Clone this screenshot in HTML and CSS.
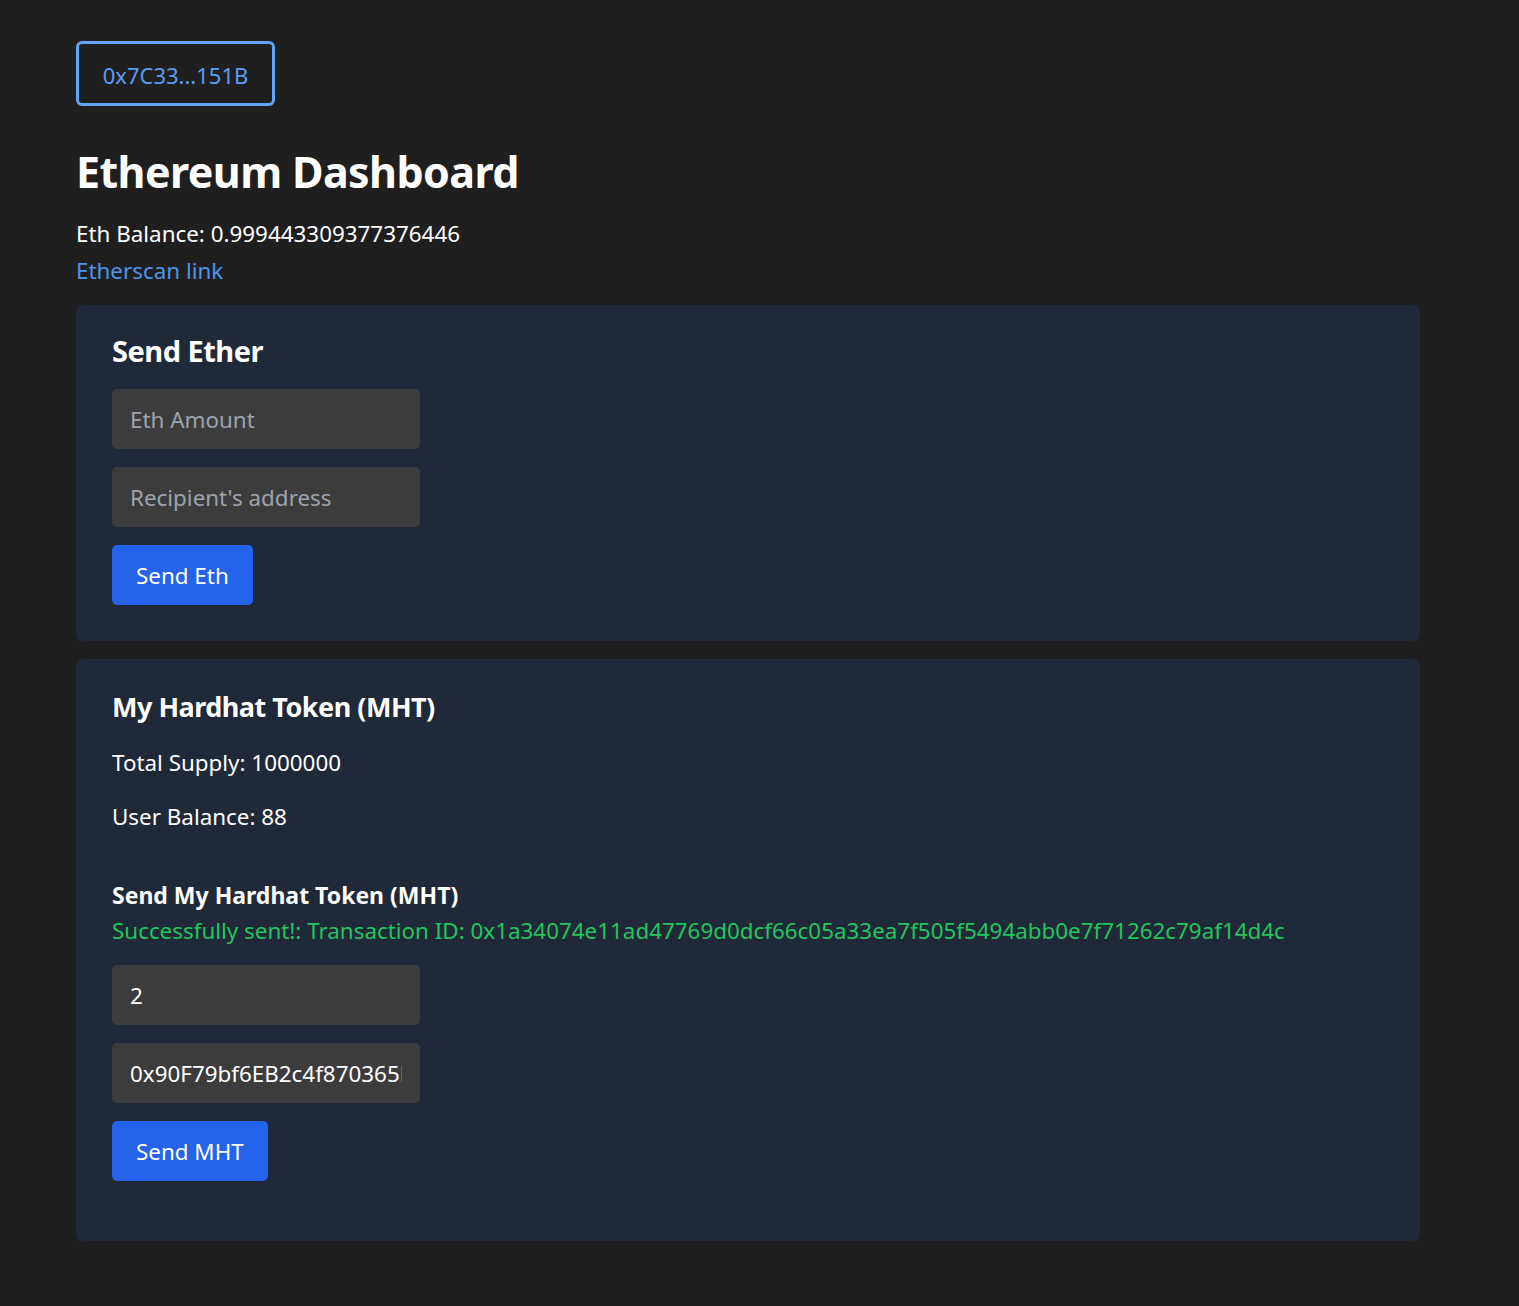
FILE: index.html
```html
<!DOCTYPE html>
<html lang="en">
<head>
<meta charset="utf-8">
<title>Ethereum Dashboard</title>
<link rel="stylesheet" href="styles.css">
</head>
<body>
<main class="page">
  <button class="wallet">0x7C33...151B</button>
  <h1 class="title">Ethereum Dashboard</h1>
  <p class="balance">Eth Balance: 0.999443309377376446</p>
  <a class="link" href="#">Etherscan link</a>

  <section class="card">
    <h2 class="card-title">Send Ether</h2>
    <div class="form">
      <input class="field" type="text" placeholder="Eth Amount">
      <input class="field" type="text" placeholder="Recipient's address">
      <button class="btn">Send Eth</button>
    </div>
  </section>

  <section class="card card-token">
    <h2 class="card-title token-title">My Hardhat Token (MHT)</h2>
    <p class="stat">Total Supply: 1000000</p>
    <p class="stat">User Balance: 88</p>
    <h3 class="sub-title">Send My Hardhat Token (MHT)</h3>
    <p class="success">Successfully sent!: Transaction ID: 0x1a34074e11ad47769d0dcf66c05a33ea7f505f5494abb0e7f71262c79af14d4c</p>
    <div class="form">
      <input class="field" type="text" value="2">
      <input class="field" type="text" value="0x90F79bf6EB2c4f870365E785982E1f101E93b906">
      <button class="btn">Send MHT</button>
    </div>
  </section>
</main>
</body>
</html>
```

FILE: styles.css
```css
* { box-sizing: border-box; }

html, body {
  margin: 0;
  padding: 0;
  background: #1f1f1f;
}

body {
  font-family: "Noto Sans", "Open Sans", sans-serif;
  color: #ffffff;
}

.page {
  width: 1344px;
  margin-left: 76px;
  padding-top: 41px;
  padding-bottom: 60px;
  display: flex;
  flex-direction: column;
  align-items: flex-start;
}

.wallet {
  font-family: inherit;
  width: 199px;
  height: 65px;
  background: transparent;
  border: 3px solid #60a5fa;
  border-radius: 6px;
  color: #5b9cf2;
  font-size: 22px;
  padding: 0;
  padding-top: 3px;
}

.title {
  margin: 38px 0 0 0;
  font-size: 43px;
  font-weight: 700;
  line-height: 56px;
  letter-spacing: -0.6px;
}

.balance {
  margin: 16px 0 0 0;
  font-size: 22.4px;
  line-height: 36px;
}

.link {
  font-size: 22.4px;
  line-height: 37px;
  color: #4e95ea;
  text-decoration: none;
}

.card {
  align-self: stretch;
  margin-top: 16px;
  background: #1f2937;
  border-radius: 6px;
  padding: 26px 36px 36px;
}

.card-token {
  margin-top: 18px;
  padding-bottom: 60px;
}

.card-title {
  margin: 0 0 18px 0;
  font-size: 29px;
  line-height: 40px;
  font-weight: 700;
  letter-spacing: -0.5px;
}

.token-title {
  font-size: 27px;
  margin-top: 2px;
  margin-bottom: 18px;
}

.stat {
  margin: 0 0 18px 0;
  font-size: 22.4px;
  line-height: 36px;
}

.sub-title {
  margin: 42px 0 0 0;
  font-size: 23px;
  line-height: 36px;
  font-weight: 700;
}

.success {
  margin: 0 0 16px 0;
  font-size: 22.4px;
  line-height: 36px;
  color: #22c55e;
}

.form {
  display: flex;
  flex-direction: column;
  align-items: flex-start;
  gap: 18px;
}

.field {
  width: 308px;
  height: 60px;
  background: #3c3c3c;
  border: none;
  border-radius: 5px;
  padding: 0 18px;
  font-family: inherit;
  font-size: 22.4px;
  color: #ffffff;
  outline: none;
}

.field::placeholder {
  color: #9ca3af;
}

.btn {
  height: 60px;
  padding: 0 24px;
  background: #2563eb;
  border: none;
  border-radius: 5px;
  color: #ffffff;
  font-family: inherit;
  font-size: 22.4px;
}
```
